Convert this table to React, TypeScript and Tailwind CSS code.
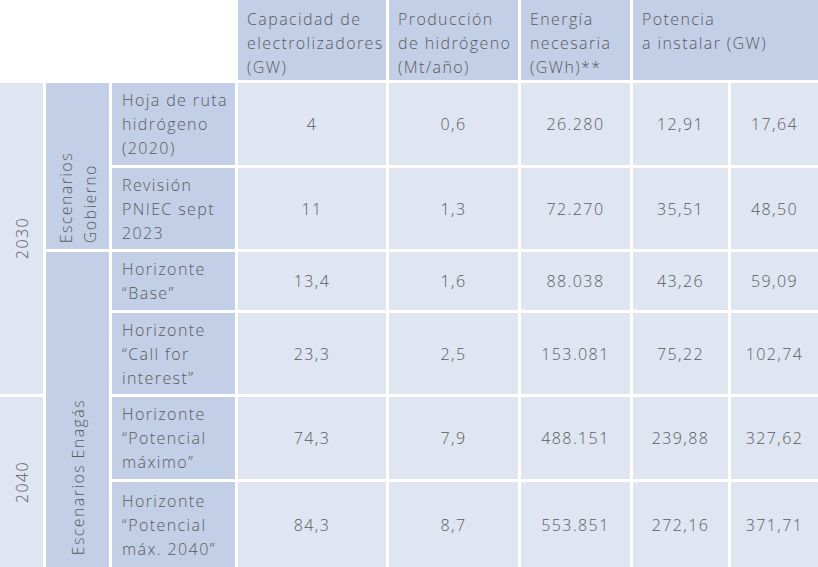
const rows = [
  { label: ["Hoja de ruta", "hidrógeno", "(2020)"], values: ["4", "0,6", "26.280", "12,91", "17,64"] },
  { label: ["Revisión", "PNIEC sept", "2023"], values: ["11", "1,3", "72.270", "35,51", "48,50"] },
  { label: ["Horizonte", "“Base”"], values: ["13,4", "1,6", "88.038", "43,26", "59,09"] },
  { label: ["Horizonte", "“Call for", "interest”"], values: ["23,3", "2,5", "153.081", "75,22", "102,74"] },
  { label: ["Horizonte", "“Potencial", "máximo”"], values: ["74,3", "7,9", "488.151", "239,88", "327,62"] },
  { label: ["Horizonte", "“Potencial", "máx. 2040”"], values: ["84,3", "8,7", "553.851", "272,16", "371,71"] },
];

const headers = [
  ["Capacidad de", "electrolizadores", "(GW)"],
  ["Producción", "de hidrógeno", "(Mt/año)"],
  ["Energía", "necesaria", "(GWh)**"],
];

function Lines({ lines }: { lines: string[] }) {
  return (
    <>
      {lines.map((l, i) => (
        <div key={i} className="whitespace-nowrap">
          {l}
        </div>
      ))}
    </>
  );
}

export default function App() {
  return (
    <div
      className="w-[818px] h-[567px] overflow-hidden bg-white text-[16px] leading-6 font-light tracking-[1.4px] text-[#585c60]"
      style={{ fontFamily: '"Open Sans", sans-serif' }}
    >
      <div className="grid grid-cols-[43px_63px_123px_148px_129px_109px_95px_1fr] grid-rows-[80px_82px_81px_58px_81px_82px_85px] gap-[3px]">
        {/* cabecera */}
        {headers.map((h, i) => (
          <div key={i} className="row-start-1 bg-[#c3cfe6] pl-[9px] pt-[7px]" style={{ gridColumnStart: i + 4 }}>
            <Lines lines={h} />
          </div>
        ))}
        <div className="row-start-1 col-start-7 col-span-2 bg-[#c3cfe6] pl-[9px] pt-[7px]">
          <Lines lines={["Potencia", "a instalar (GW)"]} />
        </div>

        {/* años */}
        <div className="col-start-1 row-start-2 row-span-4 bg-[#dfe5f1] flex items-center justify-center">
          <span className="[writing-mode:vertical-rl] rotate-180">2030</span>
        </div>
        <div className="col-start-1 row-start-6 row-span-2 bg-[#dfe5f1] flex items-center justify-center">
          <span className="[writing-mode:vertical-rl] rotate-180">2040</span>
        </div>

        {/* escenarios */}
        <div className="col-start-2 row-start-2 row-span-2 bg-[#c3cfe6] flex items-end justify-center pb-[6px]">
          <span className="[writing-mode:vertical-rl] rotate-180 whitespace-nowrap">
            Escenarios
            <br />
            Gobierno
          </span>
        </div>
        <div className="col-start-2 row-start-4 row-span-4 bg-[#c3cfe6] flex items-end justify-center pb-3">
          <span className="[writing-mode:vertical-rl] rotate-180 whitespace-nowrap">Escenarios Enagás</span>
        </div>

        {/* filas */}
        {rows.map((r, ri) => (
          <div key={ri} className="contents">
            <div className="col-start-3 bg-[#c3cfe6] flex flex-col justify-center pl-[10px]" style={{ gridRowStart: ri + 2 }}>
              <Lines lines={r.label} />
            </div>
            {r.values.map((v, vi) => (
              <div
                key={vi}
                className="bg-[#dfe5f1] flex items-center justify-center"
                style={{ gridRowStart: ri + 2, gridColumnStart: vi + 4 }}
              >
                {v}
              </div>
            ))}
          </div>
        ))}
      </div>
    </div>
  );
}
